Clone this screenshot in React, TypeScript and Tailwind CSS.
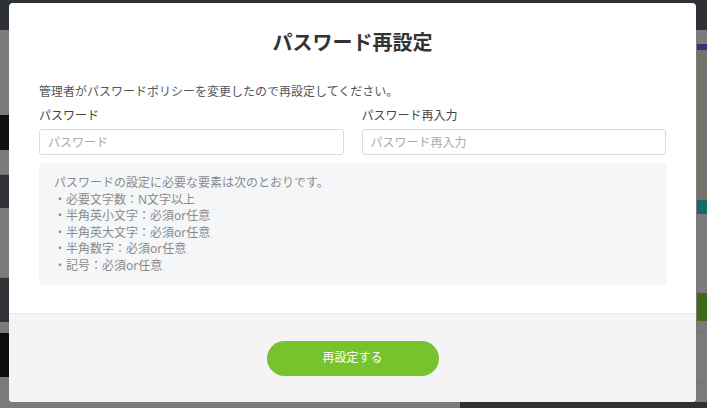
import React from "react";

const RULES = [
  "・必要文字数：N文字以上",
  "・半角英小文字：必須or任意",
  "・半角英大文字：必須or任意",
  "・半角数字：必須or任意",
  "・記号：必須or任意",
];

function Backdrop() {
  // dimmed page behind the modal, only slivers of it are visible
  return (
    <div className="flex h-[408px] w-[707px] flex-col bg-[#7b7b7b]">
      <div className="h-[30px] shrink-0 bg-[#2e3136]" />
      <div className="flex flex-1">
        <div className="flex w-[10px] flex-col">
          <div className="h-[85px]" />
          <div className="h-[35px] bg-[#0f0f0f]" />
          <div className="h-[25px] border-b border-[#6f6f6f]" />
          <div className="h-[33px] bg-[#2f3237]" />
          <div className="h-[70px] border-b border-[#6f6f6f]" />
          <div className="h-[44px] bg-[#2f3237]" />
          <div className="h-[11px]" />
          <div className="h-[44px] bg-[#0c0c0c]" />
        </div>
        <div className="flex-1" />
        <div className="flex w-[10px] flex-col">
          <div className="h-[14px]" />
          <div className="h-[6px] bg-[#3c2f7a]" />
          <div className="h-[150px] bg-[#77716b]" />
          <div className="h-[14px] bg-[#166a66]" />
          <div className="h-[79px]" />
          <div className="h-[28px] bg-[#3e6a1c]" />
          <div className="h-[12px] border-b border-[#6f6f6f]" />
          <div className="h-[50px] border-b border-[#6f6f6f]" />
        </div>
      </div>
      <div className="flex h-[6px] shrink-0">
        <div className="w-[460px]" />
        <div className="flex-1 bg-[#2e3136]" />
      </div>
    </div>
  );
}

export default function App() {
  return (
    <div
      className="relative h-[408px] w-[707px] overflow-hidden"
      style={{ fontFamily: '"Noto Sans", "Noto Sans CJK JP", sans-serif' }}
    >
      <Backdrop />
      <div className="absolute left-[9px] top-[3px] flex h-[399px] w-[687px] flex-col overflow-hidden rounded-[4px] bg-white">
        <div className="flex flex-1 flex-col px-[30px] pt-[26px]">
          <h1 className="text-center text-[20px] font-bold leading-[28px] text-[#333]">
            パスワード再設定
          </h1>
          <p className="mt-[26px] text-[12px] leading-[18px] text-[#555]">
            管理者がパスワードポリシーを変更したので再設定してください。
          </p>
          <div className="mt-[6px] grid grid-cols-2 gap-[18px]">
            <label className="flex flex-col gap-[4px]">
              <span className="text-[12px] leading-[18px] text-[#444]">パスワード</span>
              <input
                type="password"
                placeholder="パスワード"
                className="h-[26px] rounded-[3px] border border-[#dcdcdc] px-[8px] text-[12px] text-[#333] outline-none placeholder:text-[#aaa]"
              />
            </label>
            <label className="flex flex-col gap-[4px]">
              <span className="text-[12px] leading-[18px] text-[#444]">パスワード再入力</span>
              <input
                type="password"
                placeholder="パスワード再入力"
                className="h-[26px] rounded-[3px] border border-[#dcdcdc] px-[8px] text-[12px] text-[#333] outline-none placeholder:text-[#aaa]"
              />
            </label>
          </div>
          <div className="mt-[8px] h-[122px] rounded-[4px] bg-[#f5f6f8] px-[15px] pt-[12px] text-[12px] leading-[16.5px] text-[#8a8a8a]">
            <p>パスワードの設定に必要な要素は次のとおりです。</p>
            {RULES.map((r) => (
              <p key={r}>{r}</p>
            ))}
          </div>
        </div>
        <div className="flex h-[89px] shrink-0 items-center justify-center border-t border-[#ececec] bg-[#f4f4f4]">
          <button className="h-[35px] w-[172px] rounded-full bg-[#78c22d] text-[12px] text-white">
            再設定する
          </button>
        </div>
      </div>
    </div>
  );
}
